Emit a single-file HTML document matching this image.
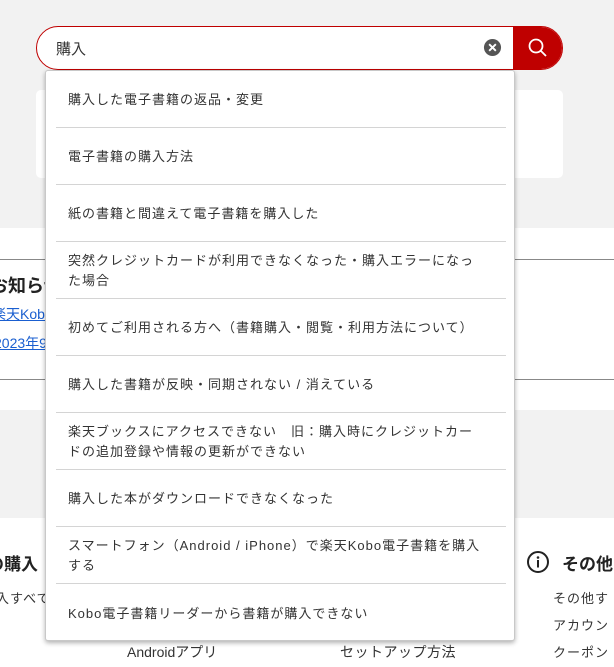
<!DOCTYPE html>
<html><head><meta charset="utf-8"><style>
*{margin:0;padding:0;box-sizing:border-box}
body{width:614px;height:667px;overflow:hidden;position:relative;background:#fff;font-family:"Liberation Sans","Noto Sans CJK JP",sans-serif;color:#333}
.a{position:absolute;white-space:nowrap}
.dd{position:absolute;left:45px;top:70px;width:470px;height:571px;background:#fff;border:1px solid #c8c8c8;border-radius:3px;box-shadow:0 2px 5px rgba(0,0,0,.3)}
.it{position:absolute;left:10px;width:450px;height:57px;border-bottom:1px solid #d4d4d4;padding:2px 24px 0 12px;display:flex;align-items:center;font-size:13px;letter-spacing:1px;line-height:20px;color:#333;white-space:normal}
.it:last-child{border-bottom:none}
</style></head><body>
<div class="a" style="left:0;top:0;width:614px;height:228px;background:#f2f2f2"></div>
<div class="a" style="left:36px;top:90px;width:527px;height:88px;background:#fff;border-radius:5px"></div>
<div class="a" style="left:0;top:259px;width:614px;height:1px;background:#888"></div>
<div class="a" style="left:0;top:379px;width:614px;height:1px;background:#888"></div>
<div class="a" style="left:0;top:410px;width:614px;height:108px;background:#f2f2f2"></div>
<div class="a" style="left:-10px;top:272px;font-size:18px;font-weight:bold;color:#222">お知らせ</div>
<div class="a" style="left:-8px;top:304px;font-size:14px;color:#1a5fd0;text-decoration:underline">楽天Kobo</div>
<div class="a" style="left:-6px;top:333px;font-size:14px;color:#1a5fd0;text-decoration:underline">2023年9</div>
<div class="a" style="left:-13px;top:550px;font-size:17px;font-weight:bold;color:#222">の購入</div>
<div class="a" style="left:-4px;top:588px;font-size:13px;letter-spacing:1px">入すべて</div>
<div class="a" style="left:127px;top:642px;font-size:14px">Androidアプリ</div>
<div class="a" style="left:340px;top:642px;font-size:14px;letter-spacing:0.5px">セットアップ方法</div>
<svg class="a" style="left:526px;top:550px" width="24" height="24" viewBox="0 0 24 24"><circle cx="12" cy="12" r="10" fill="none" stroke="#222" stroke-width="2"/><circle cx="12" cy="7.5" r="1.3" fill="#222"/><rect x="11" y="10" width="2" height="7.5" fill="#222"/></svg>
<div class="a" style="left:562px;top:550px;font-size:17px;font-weight:bold;color:#222">その他</div>
<div class="a" style="left:553px;top:588px;font-size:13px;letter-spacing:1px">その他す</div>
<div class="a" style="left:553px;top:615px;font-size:13px;letter-spacing:1px">アカウン</div>
<div class="a" style="left:553px;top:642px;font-size:13px;letter-spacing:1px">クーポン</div>
<div class="a" style="left:36px;top:26px;width:527px;height:44px;border:1px solid #bf0000;border-radius:22px;background:#fff;overflow:hidden">
<div class="a" style="left:19px;top:11px;font-size:15px;color:#333">購入</div>
<svg class="a" style="left:446px;top:11px" width="19" height="19" viewBox="0 0 20 20"><circle cx="10" cy="10" r="9" fill="#555"/><path d="M6.5 6.5L13.5 13.5M13.5 6.5L6.5 13.5" stroke="#fff" stroke-width="2"/></svg>
<div class="a" style="left:476px;top:0;width:51px;height:44px;background:#bf0000"></div>
<svg class="a" style="left:490px;top:10px" width="22" height="22" viewBox="0 0 22 22"><circle cx="9" cy="9" r="6.5" fill="none" stroke="#fff" stroke-width="1.8"/><path d="M14 14L19 19" stroke="#fff" stroke-width="1.8"/></svg>
</div>
<div class="dd">
<div class="it" style="top:0">購入した電子書籍の返品・変更</div>
<div class="it" style="top:57px">電子書籍の購入方法</div>
<div class="it" style="top:114px">紙の書籍と間違えて電子書籍を購入した</div>
<div class="it" style="top:171px">突然クレジットカードが利用できなくなった・購入エラーになった場合</div>
<div class="it" style="top:228px">初めてご利用される方へ（書籍購入・閲覧・利用方法について）</div>
<div class="it" style="top:285px">購入した書籍が反映・同期されない / 消えている</div>
<div class="it" style="top:342px">楽天ブックスにアクセスできない　旧：購入時にクレジットカードの追加登録や情報の更新ができない</div>
<div class="it" style="top:399px">購入した本がダウンロードできなくなった</div>
<div class="it" style="top:456px">スマートフォン（Android / iPhone）で楽天Kobo電子書籍を購入する</div>
<div class="it" style="top:513px">Kobo電子書籍リーダーから書籍が購入できない</div>
</div>
</body></html>
